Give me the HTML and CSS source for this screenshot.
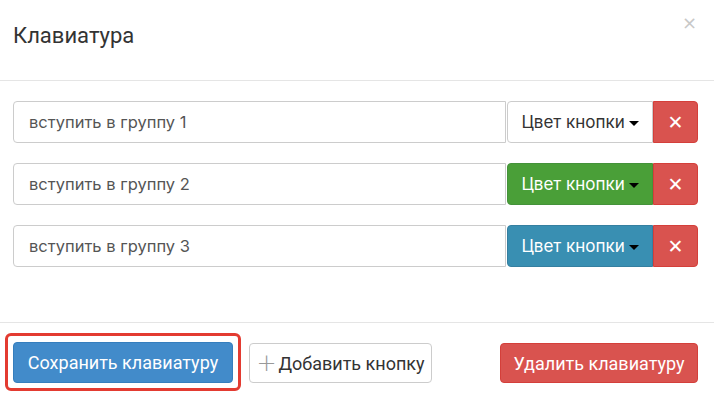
FILE: index.html
```html
<!DOCTYPE html>
<html>
	<head>
		<title>Клавиатура</title>
		<link rel="stylesheet" href="styles.css">
	</head>
	<body>
		<div class="modal">
			<div class="modal-header">
				<span class="modal-title">Клавиатура</span>
				<span class="close">&times;</span>
			</div>

			<div class="modal-body">
				<div class="row">
					<div class="field">вступить в группу 1</div>
					<div class="btn-color btn-white">Цвет кнопки <span class="caret"></span></div>
					<div class="btn-remove">&#10005;</div>
				</div>
				<div class="row">
					<div class="field">вступить в группу 2</div>
					<div class="btn-color btn-green">Цвет кнопки <span class="caret"></span></div>
					<div class="btn-remove">&#10005;</div>
				</div>
				<div class="row">
					<div class="field">вступить в группу 3</div>
					<div class="btn-color btn-teal">Цвет кнопки <span class="caret"></span></div>
					<div class="btn-remove">&#10005;</div>
				</div>
			</div>

			<div class="modal-footer">
				<div class="highlight">
					<div class="btn btn-save">Сохранить клавиатуру</div>
				</div>
				<div class="btn btn-add"><span class="plus">+</span>Добавить кнопку</div>
				<div class="btn btn-delete">Удалить клавиатуру</div>
			</div>
		</div>
	</body>
</html>
```

FILE: styles.css
```css
body {
	margin: 0;
	background: #fff;
	font-family: Inter, "Noto Sans", sans-serif;
	color: #333;
}

.modal {
	width: 714px;
	height: 397px;
	overflow: hidden;
}

.modal-header {
	height: 81px;
	border-bottom: 1px solid #e5e5e5;
	display: flex;
	justify-content: space-between;
	align-items: flex-start;
	padding: 0 17px 0 13px;
	box-sizing: border-box;
}

.modal-title {
	font-family: Roboto, sans-serif;
	font-size: 22px;
	color: #333;
	margin-top: 23px;
}

.close {
	font-family: "DejaVu Sans", sans-serif;
	font-size: 18px;
	color: #c8c8c8;
	margin-top: 12px;
}

.modal-body {
	padding: 20px 16px 0 13px;
	height: 241px;
	box-sizing: border-box;
}

.row {
	display: flex;
	height: 42px;
	margin-bottom: 20px;
}

.field {
	width: 494px;
	border: 1px solid #ccc;
	border-radius: 4px 0 0 4px;
	box-sizing: border-box;
	padding-left: 15px;
	display: flex;
	align-items: center;
	font-size: 16.5px;
	color: #555;
}

.btn-color {
	width: 146px;
	margin-left: 1px;
	border: 1px solid #ccc;
	box-sizing: border-box;
	border-radius: 4px 0 0 4px;
	display: flex;
	align-items: center;
	justify-content: center;
	font-size: 17px;
	gap: 4px;
}

.btn-white {
	background: #fff;
	color: #333;
}

.btn-green {
	background: #4a9f38;
	border-color: #44923a;
	color: #fff;
}

.btn-teal {
	background: #398fb2;
	border-color: #357fa0;
	color: #fff;
}

.caret {
	width: 0;
	height: 0;
	border-left: 5px solid transparent;
	border-right: 5px solid transparent;
	border-top: 5px solid #000;
	margin-top: 2px;
}

.btn-remove {
	width: 45px;
	background: #d9534f;
	border: 1px solid #d43f3a;
	box-sizing: border-box;
	border-radius: 0 4px 4px 0;
	color: #fff;
	font-family: "DejaVu Sans", sans-serif;
	font-weight: bold;
	font-size: 19px;
	display: flex;
	align-items: center;
	justify-content: center;
}

.modal-footer {
	border-top: 1px solid #e5e5e5;
	height: 75px;
	display: flex;
	align-items: flex-start;
	padding: 10px 16px 0 5px;
	box-sizing: border-box;
}

.highlight {
	border: 3px solid #e33b31;
	border-radius: 6px;
	padding: 6px 5px 5px 5px;
	display: flex;
}

.btn {
	height: 41px;
	border-radius: 4px;
	box-sizing: border-box;
	display: flex;
	align-items: center;
	justify-content: center;
	font-family: Roboto, sans-serif;
	font-size: 18px;
	white-space: nowrap;
}

.btn-save {
	width: 220px;
	background: #428bca;
	border: 1px solid #357ebd;
	color: #fff;
}

.btn-add {
	width: 183px;
	margin-left: 8px;
	margin-top: 10px;
	height: 40px;
	background: #fff;
	border: 1px solid #ccc;
	color: #333;
}

.plus {
	font-family: "DejaVu Sans", sans-serif;
	font-size: 24px;
	color: #999;
	margin-right: 2px;
	font-weight: 200;
}

.btn-delete {
	width: 198px;
	margin-left: auto;
	margin-top: 10px;
	height: 40px;
	background: #d9534f;
	border: 1px solid #d43f3a;
	color: #fff;
}
```
